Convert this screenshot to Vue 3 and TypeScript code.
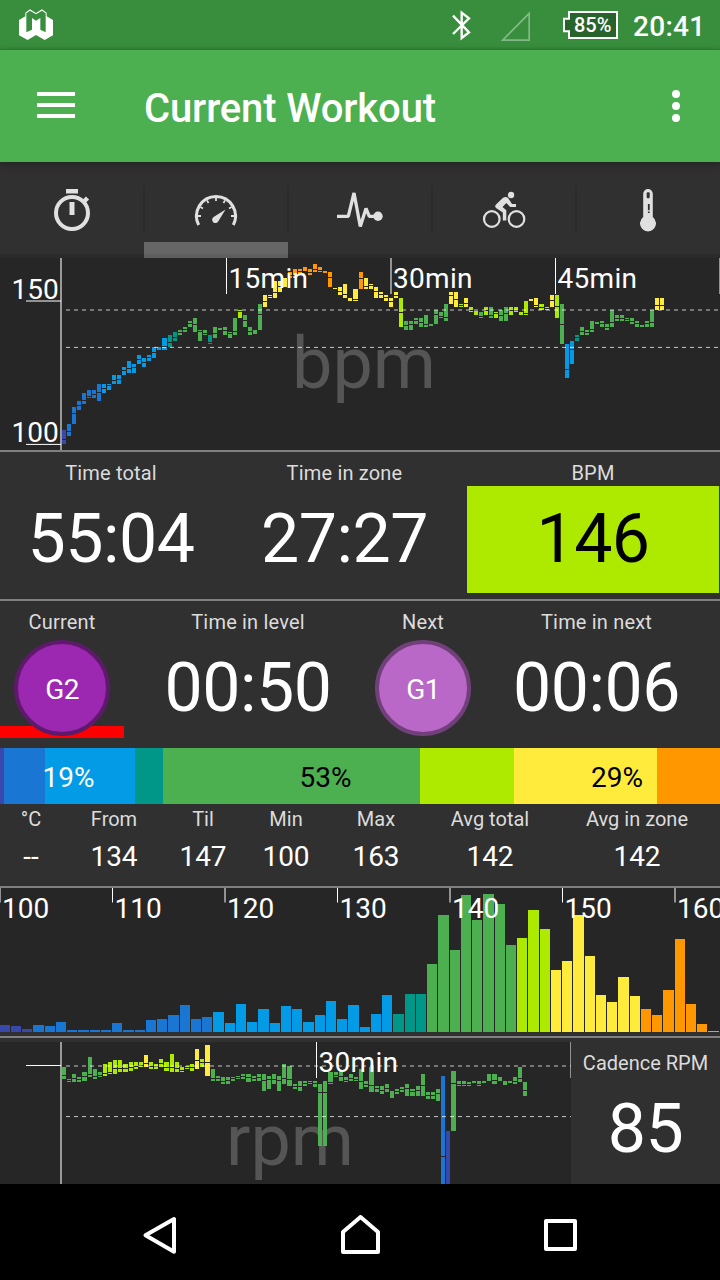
<script setup lang="ts">
type Sample = [top: number, bottom: number, mid: number, zone: number]

interface Candle {
  x: number
  w: number
  y: number
  h: number
  mid: number
  fill: string
}

const zoneColors = ['#3949ab', '#1976d2', '#039be5', '#009688', '#4caf50', '#aeea00', '#ffeb3b', '#ff9800']

/* top, bottom, median gap (0 = none), zone; three units per pixel */
const bpmSamples: Sample[] = [
  [525, 567, 554, 0], [507, 543, 529, 1], [456, 507, 475, 1], [438, 465, 451, 1], [414, 447, 436, 1],
  [405, 429, 425, 1], [405, 429, 417, 1], [387, 438, 412, 1], [387, 414, 400, 2], [387, 405, 391, 2],
  [360, 387, 376, 2], [360, 387, 373, 2], [336, 360, 347, 2], [318, 354, 340, 2], [327, 354, 337, 2],
  [300, 327, 313, 2], [309, 336, 322, 2], [300, 318, 307, 2], [277, 309, 292, 2], [277, 285, 0, 2],
  [249, 285, 275, 2], [240, 276, 262, 3], [231, 258, 248, 3], [225, 240, 233, 4], [216, 231, 223, 4],
  [198, 216, 206, 4], [189, 231, 209, 4], [225, 258, 229, 4], [225, 240, 234, 4], [240, 267, 262, 3],
  [216, 249, 235, 4], [219, 225, 0, 4], [216, 240, 227, 4], [231, 249, 236, 4], [189, 240, 229, 4],
  [165, 189, 169, 5], [180, 216, 196, 4], [216, 240, 230, 4], [225, 237, 0, 4], [147, 225, 179, 4],
  [120, 156, 140, 6], [120, 129, 124, 6], [78, 129, 113, 6], [78, 111, 94, 6], [69, 96, 0, 6],
  [51, 69, 60, 7], [42, 69, 60, 7], [42, 57, 50, 7], [36, 48, 0, 7], [42, 60, 53, 7],
  [27, 51, 44, 7], [36, 51, 46, 7], [48, 54, 0, 7], [51, 96, 67, 7], [99, 102, 0, 6],
  [96, 120, 109, 6], [87, 129, 117, 6], [129, 138, 0, 6], [102, 138, 133, 6], [51, 102, 71, 7],
  [69, 102, 94, 6], [87, 102, 92, 6], [96, 129, 109, 6], [111, 129, 119, 6], [120, 138, 126, 6],
  [129, 156, 140, 6], [111, 129, 122, 6], [129, 216, 172, 5], [198, 225, 210, 4], [198, 225, 208, 4],
  [189, 207, 196, 4], [189, 216, 203, 4], [180, 216, 207, 4], [207, 213, 0, 4], [165, 207, 178, 4],
  [171, 189, 183, 4], [147, 198, 187, 4], [111, 147, 122, 6], [111, 156, 134, 6], [147, 156, 151, 5],
  [129, 156, 146, 6], [156, 171, 166, 5], [168, 180, 0, 5], [171, 189, 184, 4], [156, 180, 166, 5],
  [156, 189, 182, 4], [171, 189, 175, 5], [165, 198, 180, 4], [156, 198, 176, 4], [156, 180, 166, 5],
  [156, 171, 167, 5], [171, 180, 0, 5], [138, 180, 175, 5], [132, 138, 0, 6], [129, 156, 150, 6],
  [147, 165, 158, 5], [156, 165, 160, 5], [120, 156, 137, 6], [120, 189, 154, 5], [147, 267, 208, 4],
  [267, 369, 343, 2], [258, 327, 283, 2], [240, 258, 248, 3], [216, 240, 229, 4], [225, 240, 233, 4],
  [198, 231, 223, 4], [201, 207, 0, 4], [198, 216, 206, 4], [207, 225, 217, 4], [165, 216, 202, 4],
  [180, 198, 190, 4], [180, 198, 190, 4], [189, 198, 194, 4], [189, 207, 200, 4], [198, 216, 206, 4],
  [210, 216, 0, 4], [198, 216, 205, 4], [165, 216, 201, 4], [129, 165, 150, 6], [129, 165, 152, 6]
]

const rpmSamples: Sample[] = [
  [96, 132, 121, 4], [132, 141, 136, 4], [117, 141, 131, 4], [126, 141, 134, 4], [111, 138, 125, 4],
  [66, 126, 117, 4], [102, 132, 123, 4], [111, 126, 122, 4], [87, 123, 114, 5], [81, 117, 111, 5],
  [75, 117, 100, 5], [75, 111, 101, 5], [87, 111, 100, 5], [81, 108, 97, 5], [81, 102, 95, 5],
  [81, 96, 90, 5], [60, 96, 84, 6], [81, 102, 95, 5], [87, 102, 94, 5], [72, 96, 84, 5],
  [81, 108, 97, 5], [57, 111, 98, 5], [81, 111, 101, 5], [96, 111, 106, 5], [93, 102, 97, 5],
  [87, 108, 98, 5], [42, 102, 76, 6], [72, 96, 83, 5], [30, 123, 82, 6], [102, 138, 129, 4],
  [123, 138, 131, 4], [126, 147, 139, 4], [126, 147, 137, 4], [126, 138, 131, 4], [123, 132, 128, 4],
  [117, 132, 123, 4], [117, 141, 128, 4], [123, 138, 129, 4], [117, 138, 128, 4], [117, 168, 137, 4],
  [123, 162, 134, 4], [117, 147, 133, 4], [123, 168, 137, 4], [87, 147, 131, 4], [93, 153, 133, 4],
  [147, 162, 153, 4], [138, 168, 155, 4], [138, 153, 145, 4], [138, 147, 142, 4], [138, 156, 146, 4],
  [147, 333, 172, 4], [138, 333, 172, 4], [111, 147, 141, 4], [111, 126, 121, 4], [108, 138, 125, 4],
  [126, 141, 135, 4], [117, 138, 129, 4], [126, 138, 132, 4], [102, 162, 140, 4], [138, 156, 149, 4],
  [96, 171, 150, 4], [153, 171, 159, 4], [153, 177, 167, 4], [147, 171, 159, 4], [168, 189, 0, 4],
  [162, 177, 170, 4], [156, 171, 164, 4], [147, 183, 161, 4], [162, 183, 170, 4], [153, 183, 167, 4],
  [117, 183, 151, 4], [171, 192, 181, 4], [171, 192, 181, 4], [162, 198, 174, 4], [123, 447, 364, 1],
  [288, 447, 0, 0], [108, 288, 145, 4], [138, 153, 147, 4], [138, 153, 147, 4], [141, 153, 147, 4],
  [138, 144, 0, 4], [138, 153, 147, 4], [138, 144, 0, 4], [117, 138, 0, 4], [117, 147, 137, 4],
  [126, 138, 0, 4], [138, 150, 0, 4], [138, 144, 0, 4], [126, 147, 140, 4], [96, 141, 130, 4],
  [141, 183, 165, 4]
]

function toCandles(samples: Sample[], start: number, pitch: number): Candle[] {
  return samples.map(([top, bottom, mid, zone], i) => {
    const x = Math.floor(start + pitch * i)
    const next = Math.floor(start + pitch * (i + 1))
    return { x, w: next - x - 1, y: top / 3, h: (bottom - top) / 3, mid: mid / 3, fill: zoneColors[zone] }
  })
}

const bpmCandles = toCandles(bpmSamples, 62.445, 5.02667)
const rpmCandles = toCandles(rpmSamples, 62.4, 5.125)

const histogramHeights: [zone: number, heights: number[]][] = [
  [0, [21, 18, 9]],
  [1, [21, 18, 30, 6, 6, 6, 6, 27, 6, 6, 36, 39, 51, 81, 39, 45]],
  [2, [60, 27, 84, 30, 69, 27, 78, 69, 30, 51, 93, 39, 81, 15, 54, 111]],
  [3, [54, 114, 114]],
  [4, [204, 351, 246, 411, 336, 414, 384, 261]],
  [5, [282, 366, 309]],
  [6, [186, 213, 351, 228, 111, 90, 165, 108]],
  [7, [69, 51, 126, 279, 84, 24, 3]]
]
const histogram = histogramHeights
  .flatMap(([zone, heights]) => heights.map((h) => ({ h: h / 3, fill: zoneColors[zone] })))
  .map((bar, i) => {
    const x = Math.floor(11.25 * i + 0.1)
    return { ...bar, x, w: Math.floor(11.25 * (i + 1) + 0.1) - x - 1 }
  })
const histogramTicks = [100, 110, 120, 130, 140, 150, 160].map((label, i) => ({ label, x: i * 112.5 }))

const bpmTicks = [
  { label: '15min', x: 226.5 },
  { label: '30min', x: 391 },
  { label: '45min', x: 555.5 },
  { label: '', x: 720 }
]

const zoneGroups = [
  { label: '19%', dark: false, parts: [[4, 0], [41, 1], [90, 2]] },
  { label: '53%', dark: true, parts: [[28, 3], [257, 4], [94, 5]] },
  { label: '29%', dark: true, parts: [[143, 6], [63, 7]] }
]

const summary = [
  { label: '°C', value: '--' },
  { label: 'From', value: '134' },
  { label: 'Til', value: '147' },
  { label: 'Min', value: '100' },
  { label: 'Max', value: '163' },
  { label: 'Avg total', value: '142' },
  { label: 'Avg in zone', value: '142' }
]
</script>

<template>
  <div class="screen">
    <header class="status">
      <svg class="logo" viewBox="57 27 102 96" width="34" height="32">
        <path fill="#fff" d="M57 60L76 49V38L90 28L108 39L126 28L140 38V49L159 60V106L134 120L108 105L83 120L57 106Z" />
        <path fill="#388e3c" d="M79 40L90 32L108 43L126 32L137 40V97L121 89V54L108 62L96 54V89L79 97Z" />
      </svg>
      <svg class="bluetooth" viewBox="273 30 60 93" width="20" height="31">
        <path d="M279 47L327 97L305 114V38L327 55L279 102" fill="none" stroke="#fff" stroke-width="7" />
      </svg>
      <svg class="signal" viewBox="420 30 93 96" width="31" height="32">
        <path d="M428 120.500H507.500V40Z" fill="none" stroke="#84b987" stroke-width="5" />
      </svg>
      <div class="battery">
        <svg viewBox="606 30 171 90" width="57" height="30">
          <path d="M627 36H771V114H627V94H612V56H627Z" fill="#28632b" stroke="#fff" stroke-width="6" />
        </svg>
        <span>85%</span>
      </div>
      <span class="clock">20:41</span>
    </header>

    <div class="appbar">
      <svg class="menu" viewBox="0 0 38 26" width="38" height="26">
        <path d="M0 2H38M0 13H38M0 24H38" stroke="#fff" stroke-width="4" />
      </svg>
      <h1>Current Workout</h1>
      <svg class="more" viewBox="0 0 8 32" width="8" height="32" fill="#fff">
        <circle cx="4" cy="4" r="4" />
        <circle cx="4" cy="16" r="4" />
        <circle cx="4" cy="28" r="4" />
      </svg>
    </div>

    <nav class="tabs">
      <div class="tab">
        <svg viewBox="0 0 48 48" width="48" height="48">
          <rect x="18" y="3" width="12" height="4.500" />
          <circle cx="24" cy="27" r="16" class="line" stroke-width="4" />
          <rect x="21.500" y="16" width="5" height="13" />
          <path d="M35 16.500L39.500 12" class="line" stroke-width="4.500" />
        </svg>
      </div>
      <div class="tab active">
        <svg viewBox="0 0 48 48" width="48" height="48">
          <path d="M6.700 39A19.500 19.500 0 1 1 41.300 39" class="line" stroke-width="3" />
          <path d="M5 30H9M43 30H39M24 11V15M8.400 21L11 22.500M39.600 21L37 22.500M15 14.400L16.500 17M33 14.400L31.500 17" class="line" stroke-width="1.800" />
          <path d="M33.500 23.500L26.500 35A3.300 3.300 0 1 1 22 30.800Z" />
        </svg>
      </div>
      <div class="tab">
        <svg viewBox="0 0 48 48" width="48" height="48">
          <path d="M1 30.300H12.300L18 7L24.300 40.500L30 22.500L33.300 30.300H40" class="line" stroke-width="3.300" stroke-linejoin="bevel" />
          <circle cx="42" cy="30.300" r="4.700" />
        </svg>
      </div>
      <div class="tab">
        <svg viewBox="0 0 48 48" width="48" height="48">
          <circle cx="11.800" cy="33" r="7.800" class="line" stroke-width="2.200" />
          <circle cx="36.500" cy="33" r="7.800" class="line" stroke-width="2.200" />
          <circle cx="31" cy="9" r="3.200" />
          <path d="M23 11.800Q25.500 10 28 11.800L32 18H36V21H30.200L26.300 17L22.500 21L26.300 24.300V34.500H22.800V26.500L16 22Q14.300 20.300 16 18.500Z" />
        </svg>
      </div>
      <div class="tab">
        <svg viewBox="0 0 48 48" width="48" height="48">
          <path d="M19.200 31V7.800A4.800 4.800 0 0 1 28.800 7.800V31A8 8 0 1 1 19.200 31Z" />
          <rect x="22.700" y="6.300" width="3" height="6" rx="1" class="hole" />
          <path d="M24.800 18V24.300M24.800 25.500V27" class="cut" />
        </svg>
      </div>
    </nav>

    <svg class="bpm-chart" viewBox="0 258 720 192" width="720" height="192">
      <text class="watermark" x="292" y="388">bpm</text>
      <g transform="translate(0 255)" shape-rendering="crispEdges">
        <template v-for="c in bpmCandles" :key="c.x">
          <rect :x="c.x" :y="c.y" :width="c.w" :height="c.h" :fill="c.fill" />
          <rect v-if="c.mid" :x="c.x" :y="c.mid - 0.5" :width="c.w" height="1" fill="#262626" />
        </template>
      </g>
      <path class="dash" d="M66 310H720M66 347.400H720" />
      <path class="axis" d="M61 258V450" />
      <path class="tick" d="M26 301H61M26 444.400H61" />
      <text class="scale" x="11.500" y="299">150</text>
      <text class="scale" x="11.500" y="442">100</text>
      <template v-for="t in bpmTicks" :key="t.x">
        <path class="tick" :d="`M${t.x} 258V294`" />
        <text class="scale minutes" :x="t.x + 2" y="288">{{ t.label }}</text>
      </template>
    </svg>

    <section class="row times">
      <div class="cell total">
        <div class="label">Time total</div>
        <div class="value">55:04</div>
      </div>
      <div class="cell zone">
        <div class="label">Time in zone</div>
        <div class="value">27:27</div>
      </div>
      <div class="cell rate">
        <div class="label">BPM</div>
        <div class="value highlighted">146</div>
      </div>
    </section>

    <section class="row levels">
      <div class="cell current">
        <div class="label">Current</div>
        <div class="progress"></div>
        <div class="badge">G2</div>
      </div>
      <div class="cell in-level">
        <div class="label">Time in level</div>
        <div class="value">00:50</div>
      </div>
      <div class="cell next">
        <div class="label">Next</div>
        <div class="badge light">G1</div>
      </div>
      <div class="cell in-next">
        <div class="label">Time in next</div>
        <div class="value">00:06</div>
      </div>
    </section>

    <section class="zones">
      <div v-for="g in zoneGroups" :key="g.label" class="zone-group" :class="{ dark: g.dark }">
        <div v-for="[w, z] in g.parts" :key="z" :style="{ width: w + 'px', background: zoneColors[z] }"></div>
        <span>{{ g.label }}</span>
      </div>
    </section>

    <section class="summary">
      <div v-for="s in summary" :key="s.label">
        <div class="label">{{ s.label }}</div>
        <div class="small-value">{{ s.value }}</div>
      </div>
    </section>

    <svg class="histogram" viewBox="0 888 720 144" width="720" height="144">
      <g shape-rendering="crispEdges">
        <rect v-for="b in histogram" :key="b.x" :x="b.x" :y="1032 - b.h" :width="b.w" :height="b.h" :fill="b.fill" />
      </g>
      <template v-for="t in histogramTicks" :key="t.label">
        <path class="tick" :d="`M${t.x} 888V902.500`" />
        <text class="scale" :x="t.x + 2" y="918">{{ t.label }}</text>
      </template>
    </svg>

    <section class="cadence">
      <svg viewBox="0 1042 571 142" width="571" height="142">
        <text class="watermark" x="226" y="1165">rpm</text>
        <g transform="translate(0 1035)" shape-rendering="crispEdges">
          <template v-for="c in rpmCandles" :key="c.x">
            <rect :x="c.x" :y="c.y" :width="c.w" :height="c.h" :fill="c.fill" />
            <rect v-if="c.mid" :x="c.x" :y="c.mid - 0.5" :width="c.w" height="1" fill="#262626" />
          </template>
        </g>
        <path class="dash" d="M66 1066H571M66 1116.600H571" />
        <path class="axis" d="M61 1042V1184" />
        <path class="tick" d="M26 1065.500H61M316.500 1042V1078M571 1042V1078" />
        <text class="scale minutes" x="318.500" y="1072">30min</text>
      </svg>
      <div class="cell cadence-value">
        <div class="label">Cadence RPM</div>
        <div class="value">85</div>
      </div>
    </section>

    <footer class="navbar">
      <svg viewBox="0 0 40 40" width="40" height="40"><path d="M5.500 20.300L34 4V36.800Z" /></svg>
      <svg viewBox="0 0 40 40" width="40" height="40"><path d="M3 37V17L20.500 2L38 17V37Z" /></svg>
      <svg viewBox="0 0 40 40" width="40" height="40"><path d="M6 6H35V34H6Z" /></svg>
    </footer>
  </div>
</template>

<style>
body {
  margin: 0;
  background: #000;
}
</style>

<style scoped>
.screen {
  width: 720px;
  height: 1280px;
  overflow: hidden;
  display: flex;
  flex-direction: column;
  background: #303030;
  color: #fff;
  font-family: Roboto, "Liberation Sans", sans-serif;
}
.screen > * {
  flex: none;
  box-sizing: border-box;
}
svg {
  display: block;
  flex: none;
}
.status {
  height: 50px;
  display: flex;
  background: linear-gradient(#388e3c 47px, #34803a 50px);
  padding-left: 19px;
}
.logo {
  margin-top: 9px;
}
.bluetooth {
  margin: 10px 0 0 398px;
}
.signal {
  margin: 10px 0 0 29px;
}
.battery {
  position: relative;
  margin: 10px 0 0 31px;
}
.battery span {
  position: absolute;
  left: 12px;
  top: 3px;
  font-size: 20px;
  line-height: 24px;
  font-weight: 500;
}
.clock {
  margin-left: 14px;
  font-size: 28px;
  line-height: 53px;
  font-weight: 500;
  letter-spacing: 0.3px;
}
.appbar {
  height: 112px;
  background: #4caf50;
  display: flex;
  align-items: center;
  padding: 0 40px 0 37px;
  position: relative;
  box-shadow: 0 2px 8px rgba(0, 0, 0, 0.3);
}
.menu {
  margin-top: -2px;
}
.appbar h1 {
  margin: 4px 0 0 69px;
  flex: 1;
  font-size: 40px;
  font-weight: 500;
  letter-spacing: -0.12px;
}
.tabs {
  height: 96px;
  display: grid;
  grid-template-columns: repeat(5, 1fr);
  background: linear-gradient(transparent 92px, rgba(0, 0, 0, 0.12) 92px);
}
.tab {
  position: relative;
  display: flex;
  align-items: center;
  justify-content: center;
}
.tab svg {
  fill: #e0e0e0;
}
.tab .line {
  fill: none;
  stroke: #e0e0e0;
}
.tab .hole {
  fill: #303030;
}
.tab .cut {
  stroke: #303030;
  stroke-width: 1.8;
}
.tab + .tab::before {
  content: "";
  position: absolute;
  left: -1px;
  top: 24px;
  width: 2px;
  height: 48px;
  background: #2b2b2b;
}
.tab.active::after {
  content: "";
  position: absolute;
  left: 0;
  bottom: 0;
  width: 144px;
  height: 16px;
  background: linear-gradient(#666 12px, #5e5e5e 12px);
}
.bpm-chart,
.histogram,
.cadence > svg {
  background: #262626;
}
.watermark {
  font-size: 72px;
  fill: #555;
}
.scale {
  font-size: 28px;
  fill: #fff;
}
.minutes {
  letter-spacing: 0.3px;
}
.tick,
.axis,
.dash {
  fill: none;
  stroke: #fff;
  stroke-width: 1;
}
.axis {
  stroke: #999;
  stroke-width: 2;
}
.dash {
  stroke-opacity: 0.75;
  stroke-dasharray: 4 4;
}
.row {
  display: flex;
  border-top: 2px solid #808080;
}
.times {
  height: 149px;
}
.levels {
  height: 149px;
}
.cell {
  position: relative;
  text-align: center;
}
.label {
  font-size: 20px;
  line-height: 24px;
  padding: 9px 0 1px;
  color: #dcdcdc;
  white-space: nowrap;
}
.row .label {
  letter-spacing: 0.18px;
}
.value {
  font-size: 68px;
  height: 107px;
  line-height: 107px;
  letter-spacing: -0.5px;
}
.total {
  width: 222px;
}
.zone {
  width: 245px;
}
.rate {
  width: 252px;
}
.highlighted {
  background: #aeea00;
  color: #000;
}
.current {
  width: 124px;
}
.in-level {
  width: 248px;
}
.next {
  width: 102px;
}
.in-next {
  width: 245px;
}
.progress {
  position: absolute;
  left: 0;
  top: 125px;
  width: 124px;
  height: 12px;
  background: #f00;
}
.badge {
  position: relative;
  box-sizing: border-box;
  width: 96px;
  height: 96px;
  margin: 5px auto 0;
  border: 4px solid #5e1a6a;
  border-radius: 50%;
  background: #9c27b0;
  font-size: 28px;
  line-height: 91px;
  letter-spacing: -0.6px;
}
.badge.light {
  border-color: #71407a;
  background: #ba68c8;
}
.zones {
  height: 56px;
  display: flex;
}
.zone-group {
  position: relative;
  display: flex;
}
.zone-group span {
  position: absolute;
  inset: 0;
  padding-left: 2px;
  text-align: center;
  font-size: 28px;
  line-height: 59px;
}
.zone-group:last-child span {
  padding-left: 0;
}
.dark {
  color: #000;
}
.summary {
  height: 84px;
  display: grid;
  grid-template-columns: 62px 104px 74px 92px 88px 140px 154px;
  text-align: center;
  border-bottom: 2px solid #808080;
}
.summary .label {
  padding: 3px 0 0;
}
.small-value {
  font-size: 28px;
  line-height: 51px;
}
.cadence {
  margin-top: 4px;
  height: 148px;
  border-top: 2px solid #808080;
  padding-top: 4px;
  display: flex;
}
.cadence-value {
  flex: 1;
}
.cadence-value .value {
  line-height: 107px;
}
.navbar {
  height: 96px;
  background: #000;
  display: flex;
  justify-content: center;
  gap: 160px;
  padding-top: 31px;
}
.navbar path {
  fill: none;
  stroke: #fff;
  stroke-width: 4;
  stroke-linejoin: round;
}
</style>
